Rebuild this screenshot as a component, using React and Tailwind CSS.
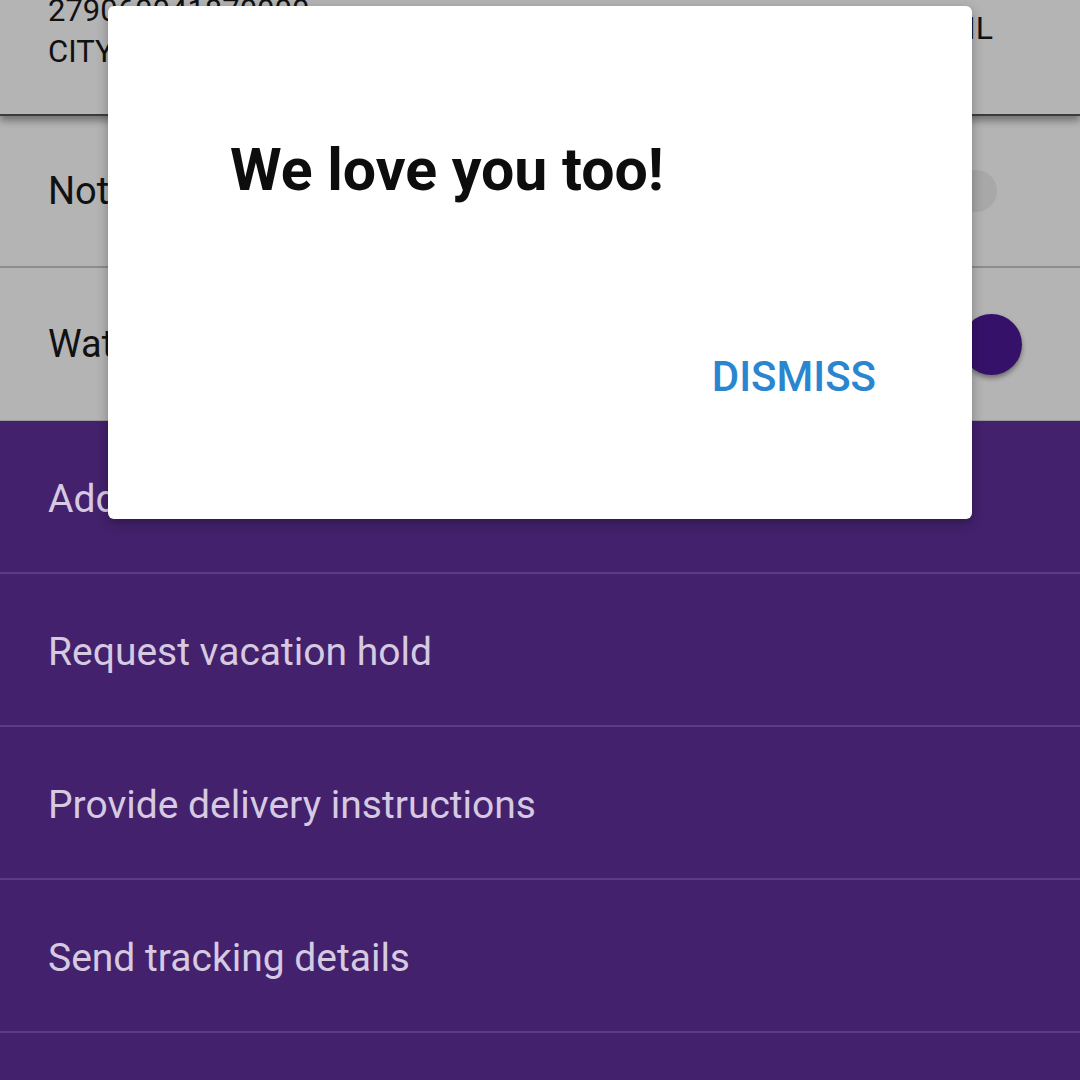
import React from 'react';

const purpleRows = ['Add to home screen', 'Request vacation hold', 'Provide delivery instructions', 'Send tracking details', ''];

const App = () => {
  return (
    <div className="relative w-[1080px] h-[1080px] overflow-hidden bg-[#43216c] font-['Roboto',sans-serif]">
      {/* Header card */}
      <div className="relative z-10 h-[116px] bg-[#b4b4b4] border-b-2 border-[#3c3c3c] shadow-[0_5px_7px_rgba(0,0,0,0.35)] flex justify-between">
        <div className="pl-[48px] -mt-[10px] text-[31px] leading-[41px] text-[#111]">
          <div>279060041870000</div>
          <div>CITY</div>
        </div>
        <div className="pr-[87px] pt-[8px] text-[32px] leading-[41px] text-[#111]">EMAIL</div>
      </div>

      {/* Gray rows */}
      <div className="h-[152px] bg-[#b4b4b4] border-b-2 border-[#8c8c8c] flex items-center justify-between pl-[48px] pr-[83px]">
        <span className="text-[38px] text-[#111]">Notifications</span>
        <div className="w-[42px] h-[42px] rounded-full bg-[#a8a8a8]" />
      </div>
      <div className="h-[153px] bg-[#b4b4b4] border-b border-[#9a9a9a] flex items-center justify-between pl-[48px] pr-[58px]">
        <span className="text-[38px] text-[#111]">Watch updates</span>
        <div className="w-[61px] h-[61px] rounded-full bg-[#36116a] shadow-[0_3px_5px_rgba(0,0,0,0.4)]" />
      </div>

      {/* Purple menu */}
      {purpleRows.map((label, i) => (
        <div
          key={i}
          className="h-[153px] border-b-2 border-[#5a3d82] flex items-center pl-[48px] pt-[6px]"
        >
          <span className="text-[39px] text-[#d6c9e2]">{label}</span>
        </div>
      ))}

      {/* Dialog */}
      <div className="absolute left-[108px] top-[6px] w-[864px] h-[513px] rounded-[6px] bg-white shadow-[0_4px_12px_rgba(0,0,0,0.3)] flex flex-col z-20">
        <h1 className="pt-[134px] pl-[122px] text-[59px] leading-none font-bold text-[#0d0d0d]">
          We love you too!
        </h1>
        <div className="mt-[157px] flex justify-end pr-[96px]">
          <button className="text-[42px] leading-none font-medium text-[#2b86d0]">DISMISS</button>
        </div>
      </div>
    </div>
  );
};

export default App;
